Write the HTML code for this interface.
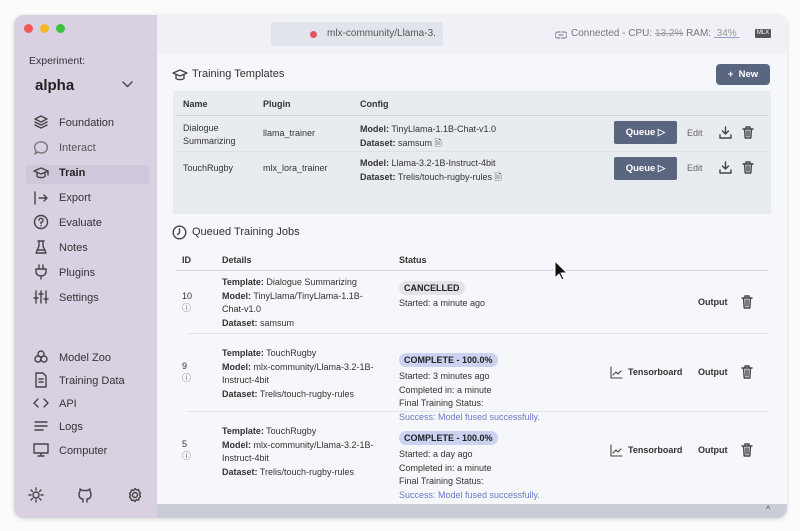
<!DOCTYPE html><html><head><style>
*{margin:0;padding:0;box-sizing:border-box}
body{width:800px;height:531px;background:#fbfbfc;font-family:"Liberation Sans",sans-serif;position:relative;overflow:hidden;color:#222}
.a{position:absolute;white-space:nowrap}
.win{position:absolute;left:14px;top:15px;width:773px;height:503px;border-radius:10px;overflow:hidden;background:#f6f7fa;box-shadow:0 1px 4px rgba(0,0,0,.15)}
.side{position:absolute;left:0;top:0;width:143px;height:503px;background:#d9d0e2}
.nav{font-size:11px;color:#333}
svg{fill:none;stroke:#444;stroke-width:1.4;stroke-linecap:round;stroke-linejoin:round}
.s{font-size:9px;color:#333}
b{font-weight:bold}
.btn{background:#5a6680;color:#fff;font-size:9.5px;font-weight:bold;border-radius:2px;text-align:center}
.pill{border-radius:8px;font-size:9px;font-weight:bold;padding:2px 5px;color:#222}
.ln{position:absolute;height:1px;background:#dcdfe5}
</style></head><body>
<div class="win">
<div class="side">
<div class="a" style="left:10px;top:9px;width:9px;height:9px;border-radius:50%;background:#f05a55"></div>
<div class="a" style="left:26px;top:9px;width:9px;height:9px;border-radius:50%;background:#f5b82e"></div>
<div class="a" style="left:42px;top:9px;width:9px;height:9px;border-radius:50%;background:#3cc23f"></div>
<div class="a nav" style="left:15px;top:40px;font-size:10.5px">Experiment:</div>
<div class="a" style="left:21px;top:62px;font-size:15px;font-weight:bold;color:#222">alpha</div>
<svg class="a" style="left:108px;top:66px" width="11" height="7"><path d="M1 1l4.5 4.5L10 1"/></svg>
<div class="a" style="left:12px;top:150px;width:123px;height:19px;background:#d0c8da;border-radius:3px"></div>
<div class="a nav" style="left:45px;top:102px">Foundation</div>
<div class="a nav" style="left:45px;top:127px;color:#555">Interact</div>
<div class="a nav" style="left:45px;top:152px;font-weight:bold;color:#222">Train</div>
<div class="a nav" style="left:45px;top:177px">Export</div>
<div class="a nav" style="left:45px;top:202px">Evaluate</div>
<div class="a nav" style="left:45px;top:227px">Notes</div>
<div class="a nav" style="left:45px;top:252px">Plugins</div>
<div class="a nav" style="left:45px;top:277px">Settings</div>
<div class="a nav" style="left:45px;top:337px">Model Zoo</div>
<div class="a nav" style="left:45px;top:360px">Training Data</div>
<div class="a nav" style="left:45px;top:383px">API</div>
<div class="a nav" style="left:45px;top:406px">Logs</div>
<div class="a nav" style="left:45px;top:430px">Computer</div>
<svg class="a" style="left:19px;top:99px" width="16" height="16"><path d="M8 2l6 3-6 3-6-3zM2 8l6 3 6-3M2 11l6 3 6-3"/></svg>
<svg class="a" style="left:19px;top:125px" width="16" height="16"><path d="M8 2a6 5.5 0 1 1-3 10L2 14l1-3A6 5.5 0 0 1 8 2z" stroke="#777"/></svg>
<svg class="a" style="left:19px;top:150px" width="16" height="16"><path d="M1 6l7-3 7 3-7 3zM4 7.5v4c2 1.5 6 1.5 8 0v-4M15 6v4"/></svg>
<svg class="a" style="left:19px;top:175px" width="16" height="16"><path d="M2 2v12M6 8h8M11 5l3 3-3 3"/></svg>
<svg class="a" style="left:19px;top:199px" width="16" height="16"><circle cx="8" cy="8" r="6.5"/><path d="M6 6.3a2 2 0 1 1 2 2v1.3M8 11.5v.3"/></svg>
<svg class="a" style="left:19px;top:224px" width="16" height="16"><path d="M5 2h6M6 2v5l-3 7h10l-3-7V2M4 11h8"/></svg>
<svg class="a" style="left:19px;top:249px" width="16" height="16"><path d="M6 1v4M10 1v4M3 5h10v3a5 4 0 0 1-10 0zM8 12v3"/></svg>
<svg class="a" style="left:19px;top:274px" width="16" height="16"><path d="M3 2v12M8 2v12M13 2v12M1 9h4M6 5h4M11 10h4"/></svg>
<svg class="a" style="left:19px;top:334px" width="16" height="16"><circle cx="8" cy="5" r="3"/><circle cx="5" cy="10" r="3"/><circle cx="11" cy="10" r="3"/></svg>
<svg class="a" style="left:19px;top:357px" width="16" height="16"><path d="M3 1h7l3 3v11H3zM6 7h4M6 10h4"/></svg>
<svg class="a" style="left:19px;top:380px" width="16" height="16"><path d="M5 4L1 8l4 4M11 4l4 4-4 4"/></svg>
<svg class="a" style="left:19px;top:403px" width="16" height="16"><path d="M2 4h12M2 8h12M2 12h8"/></svg>
<svg class="a" style="left:19px;top:427px" width="16" height="16"><path d="M1 2h14v9H1zM8 11v3M5 14h6"/></svg>
<svg class="a" style="left:14px;top:472px" width="16" height="16"><circle cx="8" cy="8" r="3"/><path d="M8 1v2M8 13v2M1 8h2M13 8h2M3 3l1.5 1.5M11.5 11.5L13 13M3 13l1.5-1.5M11.5 4.5L13 3"/></svg>
<svg class="a" style="left:63px;top:472px" width="16" height="16"><path d="M6 15v-3c-3 0-4-2-4-5 0-1 .5-2 1-2.5V2l2.5 1.5h5L13 2v2.5c.5.5 1 1.5 1 2.5 0 3-1 5-4 5v3"/></svg>
<svg class="a" style="left:113px;top:472px" width="16" height="16"><circle cx="8" cy="8" r="2.5"/><path d="M8 1.5l1.5 1.5 2-.5.5 2 1.5 1.5-1 1.8 1 1.8-1.5 1.5-.5 2-2-.5L8 14.5l-1.5-1.5-2 .5-.5-2L2.5 10l1-1.8-1-1.8L4 5l.5-2 2 .5z"/></svg>
</div>
<div class="a" style="left:143px;top:0;width:630px;height:39px;background:#eff1f6"></div>
<div class="a" style="left:257px;top:7px;width:172px;height:24px;background:#e1e4ea;border-radius:3px"></div>
<div class="a" style="left:296px;top:16px;width:7px;height:7px;border-radius:50%;background:#e05560"></div>
<div class="a" style="left:313px;top:13px;font-size:10px;color:#555">mlx-community/Llama-3.</div>
<svg class="a" style="left:541px;top:15px;stroke:#99a;" width="12" height="10"><path d="M5 2H3a3 3 0 0 0 0 6h2M7 2h2a3 3 0 0 1 0 6H7M4 5h4"/></svg>
<div class="a" style="left:557px;top:13px;font-size:10px;color:#777">Connected - CPU: <span style="text-decoration:line-through;color:#999">13.2%</span> RAM: <span style="text-decoration:underline;text-decoration-color:#99c;color:#999">&nbsp;34%&nbsp;</span></div>
<div class="a" style="left:741px;top:14px;width:16px;height:9px;background:#555;color:#fff;font-size:6px;text-align:center;line-height:9px;border-radius:1px">MLX</div>
<svg class="a" style="left:158px;top:53px" width="16" height="14"><path d="M1 5l7-3 7 3-7 3zM4 6.5v4c2 1.5 6 1.5 8 0v-4"/></svg>
<div class="a" style="left:178px;top:53px;font-size:11px;color:#333">Training Templates</div>
<div class="a btn" style="left:702px;top:49px;width:54px;height:21px;line-height:21px;border-radius:4px;font-size:9.5px">+ &nbsp;New</div>
<div class="a" style="left:159px;top:76px;width:598px;height:123px;background:#e8ebf0"></div>
<div class="a s" style="left:169px;top:84px;font-weight:bold">Name</div>
<div class="a s" style="left:249px;top:84px;font-weight:bold">Plugin</div>
<div class="a s" style="left:346px;top:84px;font-weight:bold">Config</div>
<div class="ln" style="left:162px;top:100px;width:592px;background:#cfd3da"></div>
<div class="a s" style="left:169px;top:107px;line-height:13px">Dialogue<br>Summarizing</div>
<div class="a s" style="left:249px;top:113px">llama_trainer</div>
<div class="a s" style="left:346px;top:107px;line-height:14px"><b>Model:</b> TinyLlama-1.1B-Chat-v1.0<br><b>Dataset:</b> samsum 🗎</div>
<div class="a btn" style="left:600px;top:106px;width:63px;height:23px;line-height:23px">Queue ▷</div>
<div class="a s" style="left:673px;top:113px;color:#666">Edit</div>
<svg class="a" style="left:705px;top:111px" width="13" height="13"><path d="M6.5 1v7M3.5 5l3 3 3-3M1 9v3h11V9"/></svg>
<svg class="a" style="left:728px;top:111px" width="12" height="13"><path d="M1 3h10M4 3V1h4v2M2.5 3l.7 9h5.6l.7-9M5 5v5M7 5v5"/></svg>
<div class="ln" style="left:162px;top:136px;width:592px;background:#dde0e6"></div>
<div class="a s" style="left:169px;top:148px">TouchRugby</div>
<div class="a s" style="left:249px;top:148px">mlx_lora_trainer</div>
<div class="a s" style="left:346px;top:141px;line-height:14px"><b>Model:</b> Llama-3.2-1B-Instruct-4bit<br><b>Dataset:</b> Trelis/touch-rugby-rules 🗎</div>
<div class="a btn" style="left:600px;top:142px;width:63px;height:23px;line-height:23px">Queue ▷</div>
<div class="a s" style="left:673px;top:148px;color:#666">Edit</div>
<svg class="a" style="left:705px;top:146px" width="13" height="13"><path d="M6.5 1v7M3.5 5l3 3 3-3M1 9v3h11V9"/></svg>
<svg class="a" style="left:728px;top:146px" width="12" height="13"><path d="M1 3h10M4 3V1h4v2M2.5 3l.7 9h5.6l.7-9M5 5v5M7 5v5"/></svg>
<svg class="a" style="left:158px;top:210px" width="15" height="15"><circle cx="7.5" cy="7.5" r="6.3"/><path d="M7.5 4v4l-2 1.5"/></svg>
<div class="a" style="left:178px;top:211px;font-size:11px;color:#333">Queued Training Jobs</div>
<div class="a s" style="left:168px;top:240px;font-weight:bold">ID</div>
<div class="a s" style="left:208px;top:240px;font-weight:bold">Details</div>
<div class="a s" style="left:385px;top:240px;font-weight:bold">Status</div>
<div class="ln" style="left:162px;top:255px;width:592px;background:#d5d8de"></div>
<div class="a s" style="left:168px;top:276px">10<br><span style="font-size:9px;color:#666">ⓘ</span></div>
<div class="a s" style="left:208px;top:261px;line-height:13.7px"><b>Template:</b> Dialogue Summarizing<br><b>Model:</b> TinyLlama/TinyLlama-1.1B-<br>Chat-v1.0<br><b>Dataset:</b> samsum</div>
<div class="a pill" style="left:385px;top:266px;background:#e2e4e9">CANCELLED</div>
<div class="a s" style="left:385px;top:283px">Started: a minute ago</div>
<div class="a s" style="left:684px;top:282px;font-weight:bold">Output</div>
<svg class="a" style="left:727px;top:280px" width="12" height="14"><path d="M1 3h10M4 3V1h4v2M2.5 3l.7 10h5.6l.7-10M5 5v6M7 5v6"/></svg>
<div class="ln" style="left:174px;top:318px;width:580px;background:#e3e5ea"></div>
<div class="a s" style="left:168px;top:346px">9<br><span style="color:#666">ⓘ</span></div>
<div class="a s" style="left:208px;top:331px;line-height:13.7px;padding-top:1px"><b>Template:</b> TouchRugby<br><b>Model:</b> mlx-community/Llama-3.2-1B-<br>Instruct-4bit<br><b>Dataset:</b> Trelis/touch-rugby-rules</div>
<div class="a pill" style="left:385px;top:338px;background:#ccd3f2">COMPLETE - 100.0%</div>
<div class="a s" style="left:385px;top:355px;line-height:13.7px">Started: 3 minutes ago<br>Completed in: a minute<br>Final Training Status:<br><span style="color:#6d78c9">Success: Model fused successfully.</span></div>
<svg class="a" style="left:596px;top:351px;stroke-width:1.1" width="13" height="13"><path d="M1 1v11h11M3 9l3-3 2 2 3-3"/></svg>
<div class="a s" style="left:614px;top:352px;font-weight:bold">Tensorboard</div>
<div class="a s" style="left:684px;top:352px;font-weight:bold">Output</div>
<svg class="a" style="left:727px;top:350px" width="12" height="14"><path d="M1 3h10M4 3V1h4v2M2.5 3l.7 10h5.6l.7-10M5 5v6M7 5v6"/></svg>
<div class="ln" style="left:174px;top:396px;width:580px;background:#e3e5ea"></div>
<div class="a s" style="left:168px;top:424px">5<br><span style="color:#666">ⓘ</span></div>
<div class="a s" style="left:208px;top:409px;line-height:13.7px;padding-top:1px"><b>Template:</b> TouchRugby<br><b>Model:</b> mlx-community/Llama-3.2-1B-<br>Instruct-4bit<br><b>Dataset:</b> Trelis/touch-rugby-rules</div>
<div class="a pill" style="left:385px;top:416px;background:#ccd3f2">COMPLETE - 100.0%</div>
<div class="a s" style="left:385px;top:433px;line-height:13.7px">Started: a day ago<br>Completed in: a minute<br>Final Training Status:<br><span style="color:#6d78c9">Success: Model fused successfully.</span></div>
<svg class="a" style="left:596px;top:429px;stroke-width:1.1" width="13" height="13"><path d="M1 1v11h11M3 9l3-3 2 2 3-3"/></svg>
<div class="a s" style="left:614px;top:430px;font-weight:bold">Tensorboard</div>
<div class="a s" style="left:684px;top:430px;font-weight:bold">Output</div>
<svg class="a" style="left:727px;top:428px" width="12" height="14"><path d="M1 3h10M4 3V1h4v2M2.5 3l.7 10h5.6l.7-10M5 5v6M7 5v6"/></svg>
<div class="a" style="left:143px;top:489px;width:630px;height:14px;background:#c9cdd5"></div>
<div class="a" style="left:752px;top:489px;font-size:9px;color:#444">^</div>
</div>
<svg class="a" style="left:554px;top:260px;stroke:#fff;stroke-width:1;fill:#111" width="14" height="22"><path d="M1 1v17l4-4 3 6 2-1-3-6h6z"/></svg>
</body></html>
